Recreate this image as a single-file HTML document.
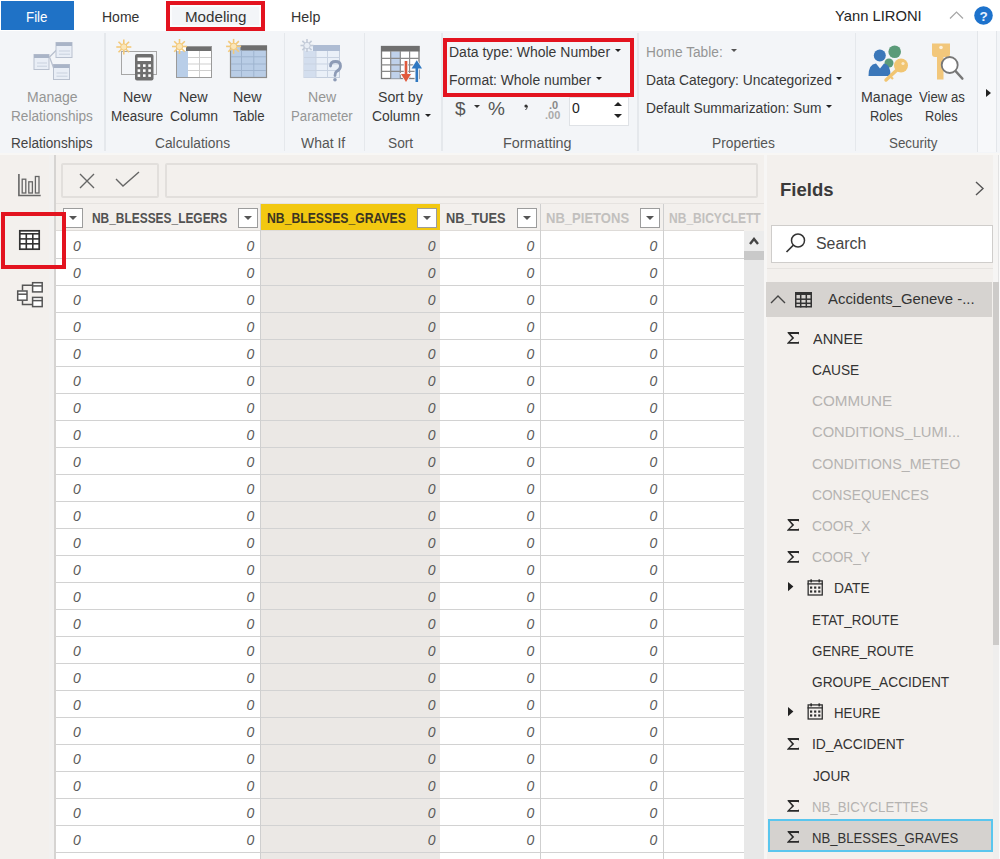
<!DOCTYPE html>
<html><head><meta charset="utf-8"><style>
html,body{margin:0;padding:0;}
body{width:1000px;height:859px;overflow:hidden;position:relative;font-family:"Liberation Sans", sans-serif;background:#f3f0ed;}
svg{overflow:visible}
</style></head><body>
<div style="position:absolute;left:0px;top:0px;width:1000px;height:31px;background:#ffffff"></div><div style="position:absolute;left:1px;top:1px;width:73px;height:29px;background:#1f72c6"></div><div style="position:absolute;left:26.05px;top:10.10px;font-size:14px;line-height:14px;color:#ffffff;font-weight:normal;font-style:normal;white-space:nowrap;transform:scaleX(0.9524);transform-origin:0 0;">File</div><div style="position:absolute;left:102.00px;top:10.10px;font-size:14px;line-height:14px;color:#333333;font-weight:normal;font-style:normal;white-space:nowrap;transform:scaleX(1.0000);transform-origin:0 0;">Home</div><div style="position:absolute;left:166px;top:1px;width:98.5px;height:30px;background:#f3f5f8;border:4px solid #e3131f;box-shadow:inset 0 0 0 2px #fbfcfd;box-sizing:border-box"></div><div style="position:absolute;left:184.92px;top:10.10px;font-size:14px;line-height:14px;color:#333333;font-weight:normal;font-style:normal;white-space:nowrap;transform:scaleX(1.0818);transform-origin:0 0;">Modeling</div><div style="position:absolute;left:291.48px;top:10.10px;font-size:14px;line-height:14px;color:#333333;font-weight:normal;font-style:normal;white-space:nowrap;transform:scaleX(1.0179);transform-origin:0 0;">Help</div><div style="position:absolute;left:835.30px;top:8.68px;font-size:14.5px;line-height:14.5px;color:#252525;font-weight:normal;font-style:normal;white-space:nowrap;transform:scaleX(1.0179);transform-origin:0 0;">Yann LIRONI</div><svg style="position:absolute;left:949px;top:11px" width="15" height="9" viewBox="0 0 15 9"><polyline points="1,7.5 7.5,1 14,7.5" fill="none" stroke="#a6a6a6" stroke-width="1.2"/></svg><svg style="position:absolute;left:974px;top:6px" width="19" height="19" viewBox="0 0 19 19"><circle cx="9.5" cy="9.5" r="9.3" fill="#1d72cc"/><text x="9.6" y="14.6" font-family="Liberation Sans" font-weight="bold" font-size="13.5" fill="#e8f2ff" text-anchor="middle">?</text></svg><div style="position:absolute;left:0px;top:31px;width:1000px;height:122px;background:#f3f5f8"></div><div style="position:absolute;left:0px;top:153px;width:1000px;height:3px;background:#f8f7f5"></div><div style="position:absolute;left:104px;top:33px;width:1.5px;height:118px;background:#e5e8ec"></div><div style="position:absolute;left:283.5px;top:33px;width:1.5px;height:118px;background:#e5e8ec"></div><div style="position:absolute;left:363.5px;top:33px;width:1.5px;height:118px;background:#e5e8ec"></div><div style="position:absolute;left:441px;top:33px;width:1.5px;height:118px;background:#e5e8ec"></div><div style="position:absolute;left:637px;top:33px;width:1.5px;height:118px;background:#e5e8ec"></div><div style="position:absolute;left:854.5px;top:33px;width:1.5px;height:118px;background:#e5e8ec"></div><div style="position:absolute;left:977px;top:31px;width:1px;height:121px;background:#e3e6ea"></div><div style="position:absolute;left:978px;top:31px;width:19px;height:121px;background:#f7f8fa"></div><div style="position:absolute;left:996px;top:31px;width:1px;height:121px;background:#e3e6ea"></div><svg style="position:absolute;left:986px;top:89px" width="6" height="8" viewBox="0 0 6 8"><polygon points="0,0 5,4 0,8" fill="#222"/></svg><div style="position:absolute;left:11.43px;top:136.10px;font-size:14px;line-height:14px;color:#444444;font-weight:normal;font-style:normal;white-space:nowrap;transform:scaleX(0.9711);transform-origin:0 0;">Relationships</div><div style="position:absolute;left:155.00px;top:136.10px;font-size:14px;line-height:14px;color:#555555;font-weight:normal;font-style:normal;white-space:nowrap;transform:scaleX(0.9842);transform-origin:0 0;">Calculations</div><div style="position:absolute;left:300.70px;top:136.10px;font-size:14px;line-height:14px;color:#555555;font-weight:normal;font-style:normal;white-space:nowrap;transform:scaleX(0.9956);transform-origin:0 0;">What If</div><div style="position:absolute;left:387.52px;top:136.10px;font-size:14px;line-height:14px;color:#555555;font-weight:normal;font-style:normal;white-space:nowrap;transform:scaleX(0.9800);transform-origin:0 0;">Sort</div><div style="position:absolute;left:503.38px;top:136.10px;font-size:14px;line-height:14px;color:#555555;font-weight:normal;font-style:normal;white-space:nowrap;transform:scaleX(1.0246);transform-origin:0 0;">Formatting</div><div style="position:absolute;left:712.31px;top:136.10px;font-size:14px;line-height:14px;color:#555555;font-weight:normal;font-style:normal;white-space:nowrap;transform:scaleX(0.9857);transform-origin:0 0;">Properties</div><div style="position:absolute;left:889.04px;top:136.10px;font-size:14px;line-height:14px;color:#555555;font-weight:normal;font-style:normal;white-space:nowrap;transform:scaleX(0.9560);transform-origin:0 0;">Security</div><div style="position:absolute;left:27.00px;top:90.10px;font-size:14px;line-height:14px;color:#959595;font-weight:normal;font-style:normal;white-space:nowrap;transform:scaleX(1.0000);transform-origin:0 0;">Manage</div><div style="position:absolute;left:11.13px;top:109.10px;font-size:14px;line-height:14px;color:#959595;font-weight:normal;font-style:normal;white-space:nowrap;transform:scaleX(0.9747);transform-origin:0 0;">Relationships</div><div style="position:absolute;left:122.73px;top:90.10px;font-size:14px;line-height:14px;color:#393939;font-weight:normal;font-style:normal;white-space:nowrap;transform:scaleX(1.0204);transform-origin:0 0;">New</div><div style="position:absolute;left:111.44px;top:109.10px;font-size:14px;line-height:14px;color:#393939;font-weight:normal;font-style:normal;white-space:nowrap;transform:scaleX(0.9604);transform-origin:0 0;">Measure</div><div style="position:absolute;left:179.17px;top:90.10px;font-size:14px;line-height:14px;color:#393939;font-weight:normal;font-style:normal;white-space:nowrap;transform:scaleX(1.0259);transform-origin:0 0;">New</div><div style="position:absolute;left:170.30px;top:109.10px;font-size:14px;line-height:14px;color:#393939;font-weight:normal;font-style:normal;white-space:nowrap;transform:scaleX(0.9979);transform-origin:0 0;">Column</div><div style="position:absolute;left:233.48px;top:90.10px;font-size:14px;line-height:14px;color:#393939;font-weight:normal;font-style:normal;white-space:nowrap;transform:scaleX(1.0185);transform-origin:0 0;">New</div><div style="position:absolute;left:232.60px;top:109.10px;font-size:14px;line-height:14px;color:#393939;font-weight:normal;font-style:normal;white-space:nowrap;transform:scaleX(0.9455);transform-origin:0 0;">Table</div><div style="position:absolute;left:307.59px;top:90.10px;font-size:14px;line-height:14px;color:#959595;font-weight:normal;font-style:normal;white-space:nowrap;transform:scaleX(1.0074);transform-origin:0 0;">New</div><div style="position:absolute;left:290.66px;top:109.10px;font-size:14px;line-height:14px;color:#959595;font-weight:normal;font-style:normal;white-space:nowrap;transform:scaleX(0.9446);transform-origin:0 0;">Parameter</div><div style="position:absolute;left:378.49px;top:90.10px;font-size:14px;line-height:14px;color:#393939;font-weight:normal;font-style:normal;white-space:nowrap;transform:scaleX(1.0093);transform-origin:0 0;">Sort by</div><div style="position:absolute;left:371.80px;top:109.10px;font-size:14px;line-height:14px;color:#393939;font-weight:normal;font-style:normal;white-space:nowrap;transform:scaleX(0.9937);transform-origin:0 0;">Column</div><svg style="position:absolute;left:425px;top:114px" width="6" height="4" viewBox="0 0 6 4"><polygon points="0,0 6,0 3,3" fill="#222"/></svg><div style="position:absolute;left:449.00px;top:45.10px;font-size:14px;line-height:14px;color:#393939;font-weight:normal;font-style:normal;white-space:nowrap;transform:scaleX(1.0000);transform-origin:0 0;">Data type: Whole Number</div><svg style="position:absolute;left:615px;top:49px" width="6" height="4" viewBox="0 0 6 4"><polygon points="0,0 6,0 3,3" fill="#222"/></svg><div style="position:absolute;left:449.01px;top:72.60px;font-size:14px;line-height:14px;color:#393939;font-weight:normal;font-style:normal;white-space:nowrap;transform:scaleX(0.9930);transform-origin:0 0;">Format: Whole number</div><svg style="position:absolute;left:596px;top:77px" width="6" height="4" viewBox="0 0 6 4"><polygon points="0,0 6,0 3,3" fill="#222"/></svg><div style="position:absolute;left:443px;top:38px;width:191px;height:58.5px;border:4px solid #e3131f;box-sizing:border-box"></div><div style="position:absolute;left:455px;top:98.85px;font-size:19px;line-height:19px;color:#555;font-weight:normal;font-style:normal;white-space:nowrap;">$</div><svg style="position:absolute;left:474px;top:105px" width="6" height="4" viewBox="0 0 6 4"><polygon points="0,0 6,0 3,3" fill="#333"/></svg><div style="position:absolute;left:488px;top:98.85px;font-size:19px;line-height:19px;color:#555;font-weight:normal;font-style:normal;white-space:nowrap;">%</div><svg style="position:absolute;left:524px;top:104px" width="5" height="7" viewBox="0 0 5 7"><circle cx="2" cy="2" r="1.6" fill="#333"/><path d="M3.3,2 Q3.3,4.5 1.5,6" stroke="#333" stroke-width="1" fill="none"/></svg><div style="position:absolute;left:549px;top:99.65px;font-size:11px;line-height:11px;color:#888;font-weight:normal;font-style:normal;white-space:nowrap;font-weight:bold">.0</div><div style="position:absolute;left:545px;top:109.65px;font-size:11px;line-height:11px;color:#aaa;font-weight:normal;font-style:normal;white-space:nowrap;font-weight:bold">.00</div><div style="position:absolute;left:569px;top:97px;width:60px;height:29px;background:#ffffff;border:1px solid #dfe2e6;box-sizing:border-box"></div><div style="position:absolute;left:572px;top:101.10px;font-size:14px;line-height:14px;color:#222;font-weight:normal;font-style:normal;white-space:nowrap;">0</div><svg style="position:absolute;left:614px;top:102px" width="8" height="4" viewBox="0 0 8 4"><polygon points="0,4 4,0 8,4" fill="#222"/></svg><svg style="position:absolute;left:614px;top:114px" width="8" height="4" viewBox="0 0 8 4"><polygon points="0,0 8,0 4,4" fill="#222"/></svg><div style="position:absolute;left:645.62px;top:45.10px;font-size:14px;line-height:14px;color:#959595;font-weight:normal;font-style:normal;white-space:nowrap;transform:scaleX(0.9792);transform-origin:0 0;">Home Table:</div><svg style="position:absolute;left:731px;top:49px" width="6" height="4" viewBox="0 0 6 4"><polygon points="0,0 6,0 3,3" fill="#555"/></svg><div style="position:absolute;left:645.61px;top:73.10px;font-size:14px;line-height:14px;color:#393939;font-weight:normal;font-style:normal;white-space:nowrap;transform:scaleX(0.9872);transform-origin:0 0;">Data Category: Uncategorized</div><svg style="position:absolute;left:836px;top:77px" width="6" height="4" viewBox="0 0 6 4"><polygon points="0,0 6,0 3,3" fill="#222"/></svg><div style="position:absolute;left:645.62px;top:101.10px;font-size:14px;line-height:14px;color:#393939;font-weight:normal;font-style:normal;white-space:nowrap;transform:scaleX(0.9847);transform-origin:0 0;">Default Summarization: Sum</div><svg style="position:absolute;left:826px;top:105px" width="6" height="4" viewBox="0 0 6 4"><polygon points="0,0 6,0 3,3" fill="#222"/></svg><div style="position:absolute;left:860.98px;top:90.10px;font-size:14px;line-height:14px;color:#393939;font-weight:normal;font-style:normal;white-space:nowrap;transform:scaleX(1.0163);transform-origin:0 0;">Manage</div><div style="position:absolute;left:870.09px;top:109.10px;font-size:14px;line-height:14px;color:#393939;font-weight:normal;font-style:normal;white-space:nowrap;transform:scaleX(0.9143);transform-origin:0 0;">Roles</div><div style="position:absolute;left:918.90px;top:90.10px;font-size:14px;line-height:14px;color:#393939;font-weight:normal;font-style:normal;white-space:nowrap;transform:scaleX(0.9408);transform-origin:0 0;">View as</div><div style="position:absolute;left:925.49px;top:109.10px;font-size:14px;line-height:14px;color:#393939;font-weight:normal;font-style:normal;white-space:nowrap;transform:scaleX(0.9086);transform-origin:0 0;">Roles</div><svg style="position:absolute;left:0px;top:0px" width="1000" height="100" viewBox="0 0 1000 100"><polyline points="56.5,50 49.5,57 54,69" fill="none" stroke="#b9c1cf" stroke-width="1.3"/><rect x="34" y="54.5" width="15" height="15" fill="#e9eef6" stroke="#b9c1cf" stroke-width="1"/><rect x="34" y="54.5" width="15" height="3.5" fill="#a9b4c7"/><line x1="37" y1="63.0" x2="47" y2="63.0" stroke="#c9d1de" stroke-width="1"/><line x1="37" y1="66.2" x2="47" y2="66.2" stroke="#c9d1de" stroke-width="1"/><rect x="56" y="42.5" width="16" height="15" fill="#e9eef6" stroke="#b9c1cf" stroke-width="1"/><rect x="56" y="42.5" width="16" height="3.5" fill="#a9b4c7"/><line x1="59" y1="51.0" x2="70" y2="51.0" stroke="#c9d1de" stroke-width="1"/><line x1="59" y1="54.2" x2="70" y2="54.2" stroke="#c9d1de" stroke-width="1"/><rect x="53.5" y="64.5" width="16" height="15" fill="#e9eef6" stroke="#b9c1cf" stroke-width="1"/><rect x="53.5" y="64.5" width="16" height="3.5" fill="#a9b4c7"/><line x1="56.5" y1="73.0" x2="67.5" y2="73.0" stroke="#c9d1de" stroke-width="1"/><line x1="56.5" y1="76.2" x2="67.5" y2="76.2" stroke="#c9d1de" stroke-width="1"/><rect x="121.5" y="51.5" width="35" height="23" fill="none" stroke="#a6a6a6" stroke-width="1"/><rect x="135" y="54" width="18.5" height="26.5" rx="2" fill="#6f6f6f"/><rect x="137.5" y="57.5" width="13.5" height="3.5" fill="#ffffff"/><rect x="137.6" y="64.3" width="2.6" height="2.6" fill="#ffffff"/><rect x="143" y="64.3" width="2.6" height="2.6" fill="#ffffff"/><rect x="148.3" y="64.3" width="2.6" height="2.6" fill="#ffffff"/><rect x="137.6" y="69.3" width="2.6" height="2.6" fill="#ffffff"/><rect x="143" y="69.3" width="2.6" height="2.6" fill="#ffffff"/><rect x="148.3" y="69.3" width="2.6" height="2.6" fill="#ffffff"/><rect x="137.6" y="74.3" width="2.6" height="2.6" fill="#ffffff"/><rect x="143" y="74.3" width="2.6" height="2.6" fill="#ffffff"/><rect x="148.3" y="74.3" width="2.6" height="2.6" fill="#ffffff"/><line x1="123.80" y1="47.00" x2="131.30" y2="47.00" stroke="#f3c97a" stroke-width="1.6"/><line x1="123.80" y1="47.00" x2="129.10" y2="52.30" stroke="#f3c97a" stroke-width="1.6"/><line x1="123.80" y1="47.00" x2="123.80" y2="54.50" stroke="#f3c97a" stroke-width="1.6"/><line x1="123.80" y1="47.00" x2="118.50" y2="52.30" stroke="#f3c97a" stroke-width="1.6"/><line x1="123.80" y1="47.00" x2="116.30" y2="47.00" stroke="#f3c97a" stroke-width="1.6"/><line x1="123.80" y1="47.00" x2="118.50" y2="41.70" stroke="#f3c97a" stroke-width="1.6"/><line x1="123.80" y1="47.00" x2="123.80" y2="39.50" stroke="#f3c97a" stroke-width="1.6"/><line x1="123.80" y1="47.00" x2="129.10" y2="41.70" stroke="#f3c97a" stroke-width="1.6"/><circle cx="123.8" cy="47" r="3.2" fill="#fbe6b8" stroke="#f3c97a" stroke-width="1"/><rect x="176.5" y="46.5" width="35" height="31" fill="#ffffff" stroke="#9a9a9a" stroke-width="1"/><rect x="176.5" y="51" width="11.5" height="26.5" fill="#b9cee8"/><rect x="186" y="46" width="26" height="5" fill="#6f6f6f"/><line x1="188" y1="57.5" x2="211.5" y2="57.5" stroke="#cfcfcf" stroke-width="1"/><line x1="188" y1="64" x2="211.5" y2="64" stroke="#cfcfcf" stroke-width="1"/><line x1="188" y1="70.5" x2="211.5" y2="70.5" stroke="#cfcfcf" stroke-width="1"/><line x1="199.5" y1="51" x2="199.5" y2="77.5" stroke="#cfcfcf" stroke-width="1"/><rect x="176.5" y="46.5" width="35" height="31" fill="none" stroke="#9a9a9a" stroke-width="1"/><line x1="179.50" y1="46.50" x2="187.00" y2="46.50" stroke="#f3c97a" stroke-width="1.6"/><line x1="179.50" y1="46.50" x2="184.80" y2="51.80" stroke="#f3c97a" stroke-width="1.6"/><line x1="179.50" y1="46.50" x2="179.50" y2="54.00" stroke="#f3c97a" stroke-width="1.6"/><line x1="179.50" y1="46.50" x2="174.20" y2="51.80" stroke="#f3c97a" stroke-width="1.6"/><line x1="179.50" y1="46.50" x2="172.00" y2="46.50" stroke="#f3c97a" stroke-width="1.6"/><line x1="179.50" y1="46.50" x2="174.20" y2="41.20" stroke="#f3c97a" stroke-width="1.6"/><line x1="179.50" y1="46.50" x2="179.50" y2="39.00" stroke="#f3c97a" stroke-width="1.6"/><line x1="179.50" y1="46.50" x2="184.80" y2="41.20" stroke="#f3c97a" stroke-width="1.6"/><circle cx="179.5" cy="46.5" r="3.2" fill="#fbe6b8" stroke="#f3c97a" stroke-width="1"/><rect x="230.5" y="46" width="36" height="31.5" fill="#b9cde6" stroke="#8c8c8c" stroke-width="1.2"/><rect x="240.5" y="45.5" width="26.5" height="5" fill="#6f6f6f"/><line x1="231" y1="56.8" x2="266" y2="56.8" stroke="#9fb4cf" stroke-width="1"/><line x1="231" y1="64" x2="266" y2="64" stroke="#9fb4cf" stroke-width="1"/><line x1="231" y1="70.5" x2="266" y2="70.5" stroke="#9fb4cf" stroke-width="1"/><line x1="241.5" y1="50.5" x2="241.5" y2="77" stroke="#9fb4cf" stroke-width="1"/><line x1="253.8" y1="50.5" x2="253.8" y2="77" stroke="#9fb4cf" stroke-width="1"/><line x1="233.60" y1="46.40" x2="241.10" y2="46.40" stroke="#f3c97a" stroke-width="1.6"/><line x1="233.60" y1="46.40" x2="238.90" y2="51.70" stroke="#f3c97a" stroke-width="1.6"/><line x1="233.60" y1="46.40" x2="233.60" y2="53.90" stroke="#f3c97a" stroke-width="1.6"/><line x1="233.60" y1="46.40" x2="228.30" y2="51.70" stroke="#f3c97a" stroke-width="1.6"/><line x1="233.60" y1="46.40" x2="226.10" y2="46.40" stroke="#f3c97a" stroke-width="1.6"/><line x1="233.60" y1="46.40" x2="228.30" y2="41.10" stroke="#f3c97a" stroke-width="1.6"/><line x1="233.60" y1="46.40" x2="233.60" y2="38.90" stroke="#f3c97a" stroke-width="1.6"/><line x1="233.60" y1="46.40" x2="238.90" y2="41.10" stroke="#f3c97a" stroke-width="1.6"/><circle cx="233.6" cy="46.4" r="3.2" fill="#fbe6b8" stroke="#f3c97a" stroke-width="1"/><rect x="304" y="45.5" width="35.5" height="32" fill="#eaf0f8" stroke="#c3cddc" stroke-width="1"/><rect x="304" y="51" width="12" height="26.5" fill="#d3deee"/><rect x="313" y="45" width="27" height="6" fill="#aebcd3"/><line x1="304" y1="57.5" x2="339.5" y2="57.5" stroke="#c9d3e2" stroke-width="1"/><line x1="304" y1="64" x2="339.5" y2="64" stroke="#c9d3e2" stroke-width="1"/><line x1="304" y1="70.5" x2="339.5" y2="70.5" stroke="#c9d3e2" stroke-width="1"/><line x1="316" y1="51" x2="316" y2="77.5" stroke="#c9d3e2" stroke-width="1"/><line x1="327.5" y1="51" x2="327.5" y2="77.5" stroke="#c9d3e2" stroke-width="1"/><line x1="307.00" y1="45.50" x2="313.50" y2="45.50" stroke="#c3cbd8" stroke-width="1.6"/><line x1="307.00" y1="45.50" x2="311.60" y2="50.10" stroke="#c3cbd8" stroke-width="1.6"/><line x1="307.00" y1="45.50" x2="307.00" y2="52.00" stroke="#c3cbd8" stroke-width="1.6"/><line x1="307.00" y1="45.50" x2="302.40" y2="50.10" stroke="#c3cbd8" stroke-width="1.6"/><line x1="307.00" y1="45.50" x2="300.50" y2="45.50" stroke="#c3cbd8" stroke-width="1.6"/><line x1="307.00" y1="45.50" x2="302.40" y2="40.90" stroke="#c3cbd8" stroke-width="1.6"/><line x1="307.00" y1="45.50" x2="307.00" y2="39.00" stroke="#c3cbd8" stroke-width="1.6"/><line x1="307.00" y1="45.50" x2="311.60" y2="40.90" stroke="#c3cbd8" stroke-width="1.6"/><circle cx="307" cy="45.5" r="3.2" fill="#e9eef5" stroke="#c3cbd8" stroke-width="1"/><path d="M330.5,66 Q330.5,61.5 335.5,61.5 Q340.5,61.5 340.5,66 Q340.5,69.5 336.5,71.5 Q335,72.5 335,75.5" fill="none" stroke="#8d9bb6" stroke-width="2.8" stroke-linecap="round"/><circle cx="335" cy="79.8" r="1.8" fill="#8d9bb6"/><rect x="381.5" y="46.5" width="37.5" height="32" fill="#ffffff" stroke="#7a7a7a" stroke-width="1.3"/><rect x="391" y="51.5" width="9.5" height="27" fill="#bfd1ea"/><rect x="381" y="46" width="38.5" height="5.5" fill="#6f6f6f"/><line x1="381.5" y1="58.4" x2="419" y2="58.4" stroke="#8a8a8a" stroke-width="1.2"/><line x1="381.5" y1="64.8" x2="419" y2="64.8" stroke="#8a8a8a" stroke-width="1.2"/><line x1="381.5" y1="71.3" x2="419" y2="71.3" stroke="#8a8a8a" stroke-width="1.2"/><line x1="390.7" y1="51" x2="390.7" y2="78.5" stroke="#8a8a8a" stroke-width="1.2"/><line x1="400.3" y1="51" x2="400.3" y2="78.5" stroke="#8a8a8a" stroke-width="1.2"/><line x1="409.6" y1="51" x2="409.6" y2="78.5" stroke="#8a8a8a" stroke-width="1.2"/><line x1="406" y1="60.5" x2="406" y2="76" stroke="#f3f5f8" stroke-width="4.5"/><polygon points="399.5,73 412.5,73 406,83.5" fill="#f3f5f8"/><line x1="416.8" y1="64" x2="416.8" y2="82.5" stroke="#f3f5f8" stroke-width="4.5"/><polygon points="410,69.5 423.5,69.5 416.8,59" fill="#f3f5f8"/><line x1="406" y1="61" x2="406" y2="76" stroke="#e0593b" stroke-width="2.6"/><polygon points="401,74 411,74 406,82" fill="#e0593b"/><line x1="416.8" y1="67" x2="416.8" y2="82" stroke="#2f78c1" stroke-width="2.6"/><polygon points="411.6,68.6 422,68.6 416.8,60.2" fill="#2f78c1"/><circle cx="894.7" cy="51.8" r="6.3" fill="#5b9b79"/><circle cx="889" cy="63" r="4.5" fill="#5b9b79"/><path d="M868.5,76 Q868.5,64 876,63.5 L880,68.5 L884,63.5 Q890.5,64 890.5,76 Z" fill="#3b77b9"/><circle cx="879.8" cy="55.6" r="6" fill="#3b77b9"/><line x1="886" y1="80" x2="898" y2="69" stroke="#f1c572" stroke-width="3.5" stroke-linecap="round"/><circle cx="901" cy="65.5" r="7" fill="#f1c572"/><circle cx="903" cy="63.5" r="1.6" fill="#fbe9c8"/><line x1="890" y1="76" x2="893" y2="79" stroke="#f1c572" stroke-width="2.2"/><path d="M932,43.5 L950,43.5 L950,54 Q950,57 947,57 L935,57 Q932,57 932,54 Z" fill="#f2c77b"/><circle cx="941" cy="47.5" r="1.8" fill="#fdf1dc"/><rect x="937" y="56" width="6.5" height="23.5" fill="#f2c77b"/><line x1="955.5" y1="71" x2="962.3" y2="78.5" stroke="#777" stroke-width="2.6" stroke-linecap="round"/><circle cx="949.7" cy="65" r="8" fill="#ffffff" stroke="#777" stroke-width="1.8"/></svg><div style="position:absolute;left:0px;top:155px;width:1000px;height:704px;background:#f3f0ed"></div><div style="position:absolute;left:49px;top:155px;width:5px;height:704px;background:#f2f1f0"></div><div style="position:absolute;left:54px;top:155px;width:2px;height:704px;background:#d6d4d2"></div><svg style="position:absolute;left:0px;top:0px" width="60" height="320" viewBox="0 0 60 320"><polyline points="18.9,174 18.9,195.5 40.7,195.5" fill="none" stroke="#666" stroke-width="1.6"/><rect x="22.2" y="179.2" width="3.6" height="13.8" fill="none" stroke="#666" stroke-width="1.3"/><rect x="28.8" y="181.8" width="3.6" height="11.2" fill="none" stroke="#666" stroke-width="1.3"/><rect x="35.4" y="176.5" width="3.6" height="16.5" fill="none" stroke="#666" stroke-width="1.3"/><rect x="19.8" y="230.8" width="19.4" height="18.4" fill="#fff" stroke="#333" stroke-width="1.7"/><line x1="19" y1="233.8" x2="40" y2="233.8" stroke="#333" stroke-width="1.6"/><line x1="19" y1="238.9" x2="40" y2="238.9" stroke="#333" stroke-width="1.6"/><line x1="19" y1="243.8" x2="40" y2="243.8" stroke="#333" stroke-width="1.6"/><line x1="26.3" y1="233" x2="26.3" y2="249.5" stroke="#333" stroke-width="1.6"/><line x1="32.8" y1="233" x2="32.8" y2="249.5" stroke="#333" stroke-width="1.6"/><polyline points="22.5,290.5 22.5,285.2 32,285.2" fill="none" stroke="#555" stroke-width="1.5"/><polyline points="22.5,300.5 22.5,304.5 32,304.5" fill="none" stroke="#555" stroke-width="1.5"/><rect x="32.6" y="282.7" width="9.6" height="9.2" fill="#fff" stroke="#555" stroke-width="1.5"/><line x1="32.6" y1="285.9" x2="42.2" y2="285.9" stroke="#555" stroke-width="1.5"/><rect x="17.7" y="291" width="9.3" height="9.2" fill="#fff" stroke="#555" stroke-width="1.5"/><line x1="17.7" y1="294.2" x2="27.0" y2="294.2" stroke="#555" stroke-width="1.5"/><rect x="32.6" y="297.4" width="9.6" height="9.2" fill="#fff" stroke="#555" stroke-width="1.5"/><line x1="32.6" y1="300.59999999999997" x2="42.2" y2="300.59999999999997" stroke="#555" stroke-width="1.5"/></svg><div style="position:absolute;left:61px;top:162.5px;width:98px;height:35.5px;border:2px solid #e2dfdc;border-radius:2px;box-sizing:border-box"></div><div style="position:absolute;left:164.5px;top:162.5px;width:593px;height:35.5px;border:2px solid #e2dfdc;border-radius:2px;box-sizing:border-box"></div><svg style="position:absolute;left:79px;top:172.5px" width="16" height="16" viewBox="0 0 16 16"><path d="M1,1 L15,15 M15,1 L1,15" stroke="#666" stroke-width="1.4" fill="none"/></svg><svg style="position:absolute;left:114.5px;top:171px" width="25" height="17" viewBox="0 0 25 17"><path d="M1,8 L8,15 L24,1" stroke="#666" stroke-width="1.4" fill="none"/></svg><div style="position:absolute;left:56px;top:204px;width:708px;height:27px;background:#f3f0ed"></div><div style="position:absolute;left:56px;top:203px;width:708px;height:1px;background:#e6e3e0"></div><div style="position:absolute;left:261px;top:204px;width:179px;height:27px;background:#f2c811"></div><div style="position:absolute;left:56px;top:231px;width:688px;height:628px;background:#ffffff"></div><div style="position:absolute;left:261px;top:231px;width:179px;height:628px;background:#ebe8e5"></div><div style="position:absolute;left:56px;top:258px;width:688px;height:1px;background:#d2d2d2"></div><div style="position:absolute;left:56px;top:285px;width:688px;height:1px;background:#d2d2d2"></div><div style="position:absolute;left:56px;top:312px;width:688px;height:1px;background:#d2d2d2"></div><div style="position:absolute;left:56px;top:339px;width:688px;height:1px;background:#d2d2d2"></div><div style="position:absolute;left:56px;top:366px;width:688px;height:1px;background:#d2d2d2"></div><div style="position:absolute;left:56px;top:393px;width:688px;height:1px;background:#d2d2d2"></div><div style="position:absolute;left:56px;top:420px;width:688px;height:1px;background:#d2d2d2"></div><div style="position:absolute;left:56px;top:447px;width:688px;height:1px;background:#d2d2d2"></div><div style="position:absolute;left:56px;top:474px;width:688px;height:1px;background:#d2d2d2"></div><div style="position:absolute;left:56px;top:501px;width:688px;height:1px;background:#d2d2d2"></div><div style="position:absolute;left:56px;top:528px;width:688px;height:1px;background:#d2d2d2"></div><div style="position:absolute;left:56px;top:555px;width:688px;height:1px;background:#d2d2d2"></div><div style="position:absolute;left:56px;top:582px;width:688px;height:1px;background:#d2d2d2"></div><div style="position:absolute;left:56px;top:609px;width:688px;height:1px;background:#d2d2d2"></div><div style="position:absolute;left:56px;top:636px;width:688px;height:1px;background:#d2d2d2"></div><div style="position:absolute;left:56px;top:663px;width:688px;height:1px;background:#d2d2d2"></div><div style="position:absolute;left:56px;top:690px;width:688px;height:1px;background:#d2d2d2"></div><div style="position:absolute;left:56px;top:717px;width:688px;height:1px;background:#d2d2d2"></div><div style="position:absolute;left:56px;top:744px;width:688px;height:1px;background:#d2d2d2"></div><div style="position:absolute;left:56px;top:771px;width:688px;height:1px;background:#d2d2d2"></div><div style="position:absolute;left:56px;top:798px;width:688px;height:1px;background:#d2d2d2"></div><div style="position:absolute;left:56px;top:825px;width:688px;height:1px;background:#d2d2d2"></div><div style="position:absolute;left:56px;top:852px;width:688px;height:1px;background:#d2d2d2"></div><div style="position:absolute;left:56px;top:230px;width:688px;height:1px;background:#dedbd8"></div><div style="position:absolute;left:260px;top:204px;width:1px;height:655px;background:#cfcfcf"></div><div style="position:absolute;left:540px;top:204px;width:1px;height:655px;background:#cfcfcf"></div><div style="position:absolute;left:663px;top:204px;width:1px;height:655px;background:#cfcfcf"></div><div style="position:absolute;left:62.5px;top:207.5px;width:20px;height:20px;background:#ffffff;border:1px solid #9c9c9c;box-sizing:border-box"></div><svg style="position:absolute;left:68.5px;top:215.5px" width="8" height="4" viewBox="0 0 8 4"><polygon points="0,0 8,0 4,4" fill="#555"/></svg><div style="position:absolute;left:237.5px;top:207.5px;width:20px;height:20px;background:#ffffff;border:1px solid #9c9c9c;box-sizing:border-box"></div><svg style="position:absolute;left:243.5px;top:215.5px" width="8" height="4" viewBox="0 0 8 4"><polygon points="0,0 8,0 4,4" fill="#555"/></svg><div style="position:absolute;left:417px;top:208px;width:20px;height:20px;background:#ffffff;border:1px solid #9c9c9c;box-sizing:border-box"></div><svg style="position:absolute;left:423.0px;top:216.0px" width="8" height="4" viewBox="0 0 8 4"><polygon points="0,0 8,0 4,4" fill="#555"/></svg><div style="position:absolute;left:517px;top:207.5px;width:20px;height:20px;background:#ffffff;border:1px solid #9c9c9c;box-sizing:border-box"></div><svg style="position:absolute;left:523.0px;top:215.5px" width="8" height="4" viewBox="0 0 8 4"><polygon points="0,0 8,0 4,4" fill="#555"/></svg><div style="position:absolute;left:640px;top:207.5px;width:20px;height:20px;background:#ffffff;border:1px solid #9c9c9c;box-sizing:border-box"></div><svg style="position:absolute;left:646.0px;top:215.5px" width="8" height="4" viewBox="0 0 8 4"><polygon points="0,0 8,0 4,4" fill="#555"/></svg><div style="position:absolute;left:91.85px;top:211.10px;font-size:14px;line-height:14px;color:#525252;font-weight:bold;font-style:normal;white-space:nowrap;transform:scaleX(0.8516);transform-origin:0 0;">NB_BLESSES_LEGERS</div><div style="position:absolute;left:266.73px;top:211.10px;font-size:14px;line-height:14px;color:#3b3421;font-weight:bold;font-style:normal;white-space:nowrap;transform:scaleX(0.8722);transform-origin:0 0;">NB_BLESSES_GRAVES</div><div style="position:absolute;left:446.09px;top:211.10px;font-size:14px;line-height:14px;color:#525252;font-weight:bold;font-style:normal;white-space:nowrap;transform:scaleX(0.9125);transform-origin:0 0;">NB_TUES</div><div style="position:absolute;left:546.07px;top:211.10px;font-size:14px;line-height:14px;color:#c2c0be;font-weight:bold;font-style:normal;white-space:nowrap;transform:scaleX(0.9318);transform-origin:0 0;">NB_PIETONS</div><div style="position:absolute;left:669.34px;top:211.10px;font-size:14px;line-height:14px;color:#c2c0be;font-weight:bold;font-style:normal;white-space:nowrap;transform:scaleX(0.8604);transform-origin:0 0;">NB_BICYCLETT</div><div style="position:absolute;left:73px;top:239.10px;font-size:14px;line-height:14px;color:#5a5a5a;font-weight:normal;font-style:italic;white-space:nowrap;">0</div><div style="position:absolute;right:745.7px;top:239.10px;font-size:14px;line-height:14px;color:#5a5a5a;font-weight:normal;font-style:italic;white-space:nowrap;">0</div><div style="position:absolute;right:564.5px;top:239.10px;font-size:14px;line-height:14px;color:#5a5a5a;font-weight:normal;font-style:italic;white-space:nowrap;">0</div><div style="position:absolute;right:465.79999999999995px;top:239.10px;font-size:14px;line-height:14px;color:#5a5a5a;font-weight:normal;font-style:italic;white-space:nowrap;">0</div><div style="position:absolute;right:342.70000000000005px;top:239.10px;font-size:14px;line-height:14px;color:#5a5a5a;font-weight:normal;font-style:italic;white-space:nowrap;">0</div><div style="position:absolute;left:73px;top:266.10px;font-size:14px;line-height:14px;color:#5a5a5a;font-weight:normal;font-style:italic;white-space:nowrap;">0</div><div style="position:absolute;right:745.7px;top:266.10px;font-size:14px;line-height:14px;color:#5a5a5a;font-weight:normal;font-style:italic;white-space:nowrap;">0</div><div style="position:absolute;right:564.5px;top:266.10px;font-size:14px;line-height:14px;color:#5a5a5a;font-weight:normal;font-style:italic;white-space:nowrap;">0</div><div style="position:absolute;right:465.79999999999995px;top:266.10px;font-size:14px;line-height:14px;color:#5a5a5a;font-weight:normal;font-style:italic;white-space:nowrap;">0</div><div style="position:absolute;right:342.70000000000005px;top:266.10px;font-size:14px;line-height:14px;color:#5a5a5a;font-weight:normal;font-style:italic;white-space:nowrap;">0</div><div style="position:absolute;left:73px;top:293.10px;font-size:14px;line-height:14px;color:#5a5a5a;font-weight:normal;font-style:italic;white-space:nowrap;">0</div><div style="position:absolute;right:745.7px;top:293.10px;font-size:14px;line-height:14px;color:#5a5a5a;font-weight:normal;font-style:italic;white-space:nowrap;">0</div><div style="position:absolute;right:564.5px;top:293.10px;font-size:14px;line-height:14px;color:#5a5a5a;font-weight:normal;font-style:italic;white-space:nowrap;">0</div><div style="position:absolute;right:465.79999999999995px;top:293.10px;font-size:14px;line-height:14px;color:#5a5a5a;font-weight:normal;font-style:italic;white-space:nowrap;">0</div><div style="position:absolute;right:342.70000000000005px;top:293.10px;font-size:14px;line-height:14px;color:#5a5a5a;font-weight:normal;font-style:italic;white-space:nowrap;">0</div><div style="position:absolute;left:73px;top:320.10px;font-size:14px;line-height:14px;color:#5a5a5a;font-weight:normal;font-style:italic;white-space:nowrap;">0</div><div style="position:absolute;right:745.7px;top:320.10px;font-size:14px;line-height:14px;color:#5a5a5a;font-weight:normal;font-style:italic;white-space:nowrap;">0</div><div style="position:absolute;right:564.5px;top:320.10px;font-size:14px;line-height:14px;color:#5a5a5a;font-weight:normal;font-style:italic;white-space:nowrap;">0</div><div style="position:absolute;right:465.79999999999995px;top:320.10px;font-size:14px;line-height:14px;color:#5a5a5a;font-weight:normal;font-style:italic;white-space:nowrap;">0</div><div style="position:absolute;right:342.70000000000005px;top:320.10px;font-size:14px;line-height:14px;color:#5a5a5a;font-weight:normal;font-style:italic;white-space:nowrap;">0</div><div style="position:absolute;left:73px;top:347.10px;font-size:14px;line-height:14px;color:#5a5a5a;font-weight:normal;font-style:italic;white-space:nowrap;">0</div><div style="position:absolute;right:745.7px;top:347.10px;font-size:14px;line-height:14px;color:#5a5a5a;font-weight:normal;font-style:italic;white-space:nowrap;">0</div><div style="position:absolute;right:564.5px;top:347.10px;font-size:14px;line-height:14px;color:#5a5a5a;font-weight:normal;font-style:italic;white-space:nowrap;">0</div><div style="position:absolute;right:465.79999999999995px;top:347.10px;font-size:14px;line-height:14px;color:#5a5a5a;font-weight:normal;font-style:italic;white-space:nowrap;">0</div><div style="position:absolute;right:342.70000000000005px;top:347.10px;font-size:14px;line-height:14px;color:#5a5a5a;font-weight:normal;font-style:italic;white-space:nowrap;">0</div><div style="position:absolute;left:73px;top:374.10px;font-size:14px;line-height:14px;color:#5a5a5a;font-weight:normal;font-style:italic;white-space:nowrap;">0</div><div style="position:absolute;right:745.7px;top:374.10px;font-size:14px;line-height:14px;color:#5a5a5a;font-weight:normal;font-style:italic;white-space:nowrap;">0</div><div style="position:absolute;right:564.5px;top:374.10px;font-size:14px;line-height:14px;color:#5a5a5a;font-weight:normal;font-style:italic;white-space:nowrap;">0</div><div style="position:absolute;right:465.79999999999995px;top:374.10px;font-size:14px;line-height:14px;color:#5a5a5a;font-weight:normal;font-style:italic;white-space:nowrap;">0</div><div style="position:absolute;right:342.70000000000005px;top:374.10px;font-size:14px;line-height:14px;color:#5a5a5a;font-weight:normal;font-style:italic;white-space:nowrap;">0</div><div style="position:absolute;left:73px;top:401.10px;font-size:14px;line-height:14px;color:#5a5a5a;font-weight:normal;font-style:italic;white-space:nowrap;">0</div><div style="position:absolute;right:745.7px;top:401.10px;font-size:14px;line-height:14px;color:#5a5a5a;font-weight:normal;font-style:italic;white-space:nowrap;">0</div><div style="position:absolute;right:564.5px;top:401.10px;font-size:14px;line-height:14px;color:#5a5a5a;font-weight:normal;font-style:italic;white-space:nowrap;">0</div><div style="position:absolute;right:465.79999999999995px;top:401.10px;font-size:14px;line-height:14px;color:#5a5a5a;font-weight:normal;font-style:italic;white-space:nowrap;">0</div><div style="position:absolute;right:342.70000000000005px;top:401.10px;font-size:14px;line-height:14px;color:#5a5a5a;font-weight:normal;font-style:italic;white-space:nowrap;">0</div><div style="position:absolute;left:73px;top:428.10px;font-size:14px;line-height:14px;color:#5a5a5a;font-weight:normal;font-style:italic;white-space:nowrap;">0</div><div style="position:absolute;right:745.7px;top:428.10px;font-size:14px;line-height:14px;color:#5a5a5a;font-weight:normal;font-style:italic;white-space:nowrap;">0</div><div style="position:absolute;right:564.5px;top:428.10px;font-size:14px;line-height:14px;color:#5a5a5a;font-weight:normal;font-style:italic;white-space:nowrap;">0</div><div style="position:absolute;right:465.79999999999995px;top:428.10px;font-size:14px;line-height:14px;color:#5a5a5a;font-weight:normal;font-style:italic;white-space:nowrap;">0</div><div style="position:absolute;right:342.70000000000005px;top:428.10px;font-size:14px;line-height:14px;color:#5a5a5a;font-weight:normal;font-style:italic;white-space:nowrap;">0</div><div style="position:absolute;left:73px;top:455.10px;font-size:14px;line-height:14px;color:#5a5a5a;font-weight:normal;font-style:italic;white-space:nowrap;">0</div><div style="position:absolute;right:745.7px;top:455.10px;font-size:14px;line-height:14px;color:#5a5a5a;font-weight:normal;font-style:italic;white-space:nowrap;">0</div><div style="position:absolute;right:564.5px;top:455.10px;font-size:14px;line-height:14px;color:#5a5a5a;font-weight:normal;font-style:italic;white-space:nowrap;">0</div><div style="position:absolute;right:465.79999999999995px;top:455.10px;font-size:14px;line-height:14px;color:#5a5a5a;font-weight:normal;font-style:italic;white-space:nowrap;">0</div><div style="position:absolute;right:342.70000000000005px;top:455.10px;font-size:14px;line-height:14px;color:#5a5a5a;font-weight:normal;font-style:italic;white-space:nowrap;">0</div><div style="position:absolute;left:73px;top:482.10px;font-size:14px;line-height:14px;color:#5a5a5a;font-weight:normal;font-style:italic;white-space:nowrap;">0</div><div style="position:absolute;right:745.7px;top:482.10px;font-size:14px;line-height:14px;color:#5a5a5a;font-weight:normal;font-style:italic;white-space:nowrap;">0</div><div style="position:absolute;right:564.5px;top:482.10px;font-size:14px;line-height:14px;color:#5a5a5a;font-weight:normal;font-style:italic;white-space:nowrap;">0</div><div style="position:absolute;right:465.79999999999995px;top:482.10px;font-size:14px;line-height:14px;color:#5a5a5a;font-weight:normal;font-style:italic;white-space:nowrap;">0</div><div style="position:absolute;right:342.70000000000005px;top:482.10px;font-size:14px;line-height:14px;color:#5a5a5a;font-weight:normal;font-style:italic;white-space:nowrap;">0</div><div style="position:absolute;left:73px;top:509.10px;font-size:14px;line-height:14px;color:#5a5a5a;font-weight:normal;font-style:italic;white-space:nowrap;">0</div><div style="position:absolute;right:745.7px;top:509.10px;font-size:14px;line-height:14px;color:#5a5a5a;font-weight:normal;font-style:italic;white-space:nowrap;">0</div><div style="position:absolute;right:564.5px;top:509.10px;font-size:14px;line-height:14px;color:#5a5a5a;font-weight:normal;font-style:italic;white-space:nowrap;">0</div><div style="position:absolute;right:465.79999999999995px;top:509.10px;font-size:14px;line-height:14px;color:#5a5a5a;font-weight:normal;font-style:italic;white-space:nowrap;">0</div><div style="position:absolute;right:342.70000000000005px;top:509.10px;font-size:14px;line-height:14px;color:#5a5a5a;font-weight:normal;font-style:italic;white-space:nowrap;">0</div><div style="position:absolute;left:73px;top:536.10px;font-size:14px;line-height:14px;color:#5a5a5a;font-weight:normal;font-style:italic;white-space:nowrap;">0</div><div style="position:absolute;right:745.7px;top:536.10px;font-size:14px;line-height:14px;color:#5a5a5a;font-weight:normal;font-style:italic;white-space:nowrap;">0</div><div style="position:absolute;right:564.5px;top:536.10px;font-size:14px;line-height:14px;color:#5a5a5a;font-weight:normal;font-style:italic;white-space:nowrap;">0</div><div style="position:absolute;right:465.79999999999995px;top:536.10px;font-size:14px;line-height:14px;color:#5a5a5a;font-weight:normal;font-style:italic;white-space:nowrap;">0</div><div style="position:absolute;right:342.70000000000005px;top:536.10px;font-size:14px;line-height:14px;color:#5a5a5a;font-weight:normal;font-style:italic;white-space:nowrap;">0</div><div style="position:absolute;left:73px;top:563.10px;font-size:14px;line-height:14px;color:#5a5a5a;font-weight:normal;font-style:italic;white-space:nowrap;">0</div><div style="position:absolute;right:745.7px;top:563.10px;font-size:14px;line-height:14px;color:#5a5a5a;font-weight:normal;font-style:italic;white-space:nowrap;">0</div><div style="position:absolute;right:564.5px;top:563.10px;font-size:14px;line-height:14px;color:#5a5a5a;font-weight:normal;font-style:italic;white-space:nowrap;">0</div><div style="position:absolute;right:465.79999999999995px;top:563.10px;font-size:14px;line-height:14px;color:#5a5a5a;font-weight:normal;font-style:italic;white-space:nowrap;">0</div><div style="position:absolute;right:342.70000000000005px;top:563.10px;font-size:14px;line-height:14px;color:#5a5a5a;font-weight:normal;font-style:italic;white-space:nowrap;">0</div><div style="position:absolute;left:73px;top:590.10px;font-size:14px;line-height:14px;color:#5a5a5a;font-weight:normal;font-style:italic;white-space:nowrap;">0</div><div style="position:absolute;right:745.7px;top:590.10px;font-size:14px;line-height:14px;color:#5a5a5a;font-weight:normal;font-style:italic;white-space:nowrap;">0</div><div style="position:absolute;right:564.5px;top:590.10px;font-size:14px;line-height:14px;color:#5a5a5a;font-weight:normal;font-style:italic;white-space:nowrap;">0</div><div style="position:absolute;right:465.79999999999995px;top:590.10px;font-size:14px;line-height:14px;color:#5a5a5a;font-weight:normal;font-style:italic;white-space:nowrap;">0</div><div style="position:absolute;right:342.70000000000005px;top:590.10px;font-size:14px;line-height:14px;color:#5a5a5a;font-weight:normal;font-style:italic;white-space:nowrap;">0</div><div style="position:absolute;left:73px;top:617.10px;font-size:14px;line-height:14px;color:#5a5a5a;font-weight:normal;font-style:italic;white-space:nowrap;">0</div><div style="position:absolute;right:745.7px;top:617.10px;font-size:14px;line-height:14px;color:#5a5a5a;font-weight:normal;font-style:italic;white-space:nowrap;">0</div><div style="position:absolute;right:564.5px;top:617.10px;font-size:14px;line-height:14px;color:#5a5a5a;font-weight:normal;font-style:italic;white-space:nowrap;">0</div><div style="position:absolute;right:465.79999999999995px;top:617.10px;font-size:14px;line-height:14px;color:#5a5a5a;font-weight:normal;font-style:italic;white-space:nowrap;">0</div><div style="position:absolute;right:342.70000000000005px;top:617.10px;font-size:14px;line-height:14px;color:#5a5a5a;font-weight:normal;font-style:italic;white-space:nowrap;">0</div><div style="position:absolute;left:73px;top:644.10px;font-size:14px;line-height:14px;color:#5a5a5a;font-weight:normal;font-style:italic;white-space:nowrap;">0</div><div style="position:absolute;right:745.7px;top:644.10px;font-size:14px;line-height:14px;color:#5a5a5a;font-weight:normal;font-style:italic;white-space:nowrap;">0</div><div style="position:absolute;right:564.5px;top:644.10px;font-size:14px;line-height:14px;color:#5a5a5a;font-weight:normal;font-style:italic;white-space:nowrap;">0</div><div style="position:absolute;right:465.79999999999995px;top:644.10px;font-size:14px;line-height:14px;color:#5a5a5a;font-weight:normal;font-style:italic;white-space:nowrap;">0</div><div style="position:absolute;right:342.70000000000005px;top:644.10px;font-size:14px;line-height:14px;color:#5a5a5a;font-weight:normal;font-style:italic;white-space:nowrap;">0</div><div style="position:absolute;left:73px;top:671.10px;font-size:14px;line-height:14px;color:#5a5a5a;font-weight:normal;font-style:italic;white-space:nowrap;">0</div><div style="position:absolute;right:745.7px;top:671.10px;font-size:14px;line-height:14px;color:#5a5a5a;font-weight:normal;font-style:italic;white-space:nowrap;">0</div><div style="position:absolute;right:564.5px;top:671.10px;font-size:14px;line-height:14px;color:#5a5a5a;font-weight:normal;font-style:italic;white-space:nowrap;">0</div><div style="position:absolute;right:465.79999999999995px;top:671.10px;font-size:14px;line-height:14px;color:#5a5a5a;font-weight:normal;font-style:italic;white-space:nowrap;">0</div><div style="position:absolute;right:342.70000000000005px;top:671.10px;font-size:14px;line-height:14px;color:#5a5a5a;font-weight:normal;font-style:italic;white-space:nowrap;">0</div><div style="position:absolute;left:73px;top:698.10px;font-size:14px;line-height:14px;color:#5a5a5a;font-weight:normal;font-style:italic;white-space:nowrap;">0</div><div style="position:absolute;right:745.7px;top:698.10px;font-size:14px;line-height:14px;color:#5a5a5a;font-weight:normal;font-style:italic;white-space:nowrap;">0</div><div style="position:absolute;right:564.5px;top:698.10px;font-size:14px;line-height:14px;color:#5a5a5a;font-weight:normal;font-style:italic;white-space:nowrap;">0</div><div style="position:absolute;right:465.79999999999995px;top:698.10px;font-size:14px;line-height:14px;color:#5a5a5a;font-weight:normal;font-style:italic;white-space:nowrap;">0</div><div style="position:absolute;right:342.70000000000005px;top:698.10px;font-size:14px;line-height:14px;color:#5a5a5a;font-weight:normal;font-style:italic;white-space:nowrap;">0</div><div style="position:absolute;left:73px;top:725.10px;font-size:14px;line-height:14px;color:#5a5a5a;font-weight:normal;font-style:italic;white-space:nowrap;">0</div><div style="position:absolute;right:745.7px;top:725.10px;font-size:14px;line-height:14px;color:#5a5a5a;font-weight:normal;font-style:italic;white-space:nowrap;">0</div><div style="position:absolute;right:564.5px;top:725.10px;font-size:14px;line-height:14px;color:#5a5a5a;font-weight:normal;font-style:italic;white-space:nowrap;">0</div><div style="position:absolute;right:465.79999999999995px;top:725.10px;font-size:14px;line-height:14px;color:#5a5a5a;font-weight:normal;font-style:italic;white-space:nowrap;">0</div><div style="position:absolute;right:342.70000000000005px;top:725.10px;font-size:14px;line-height:14px;color:#5a5a5a;font-weight:normal;font-style:italic;white-space:nowrap;">0</div><div style="position:absolute;left:73px;top:752.10px;font-size:14px;line-height:14px;color:#5a5a5a;font-weight:normal;font-style:italic;white-space:nowrap;">0</div><div style="position:absolute;right:745.7px;top:752.10px;font-size:14px;line-height:14px;color:#5a5a5a;font-weight:normal;font-style:italic;white-space:nowrap;">0</div><div style="position:absolute;right:564.5px;top:752.10px;font-size:14px;line-height:14px;color:#5a5a5a;font-weight:normal;font-style:italic;white-space:nowrap;">0</div><div style="position:absolute;right:465.79999999999995px;top:752.10px;font-size:14px;line-height:14px;color:#5a5a5a;font-weight:normal;font-style:italic;white-space:nowrap;">0</div><div style="position:absolute;right:342.70000000000005px;top:752.10px;font-size:14px;line-height:14px;color:#5a5a5a;font-weight:normal;font-style:italic;white-space:nowrap;">0</div><div style="position:absolute;left:73px;top:779.10px;font-size:14px;line-height:14px;color:#5a5a5a;font-weight:normal;font-style:italic;white-space:nowrap;">0</div><div style="position:absolute;right:745.7px;top:779.10px;font-size:14px;line-height:14px;color:#5a5a5a;font-weight:normal;font-style:italic;white-space:nowrap;">0</div><div style="position:absolute;right:564.5px;top:779.10px;font-size:14px;line-height:14px;color:#5a5a5a;font-weight:normal;font-style:italic;white-space:nowrap;">0</div><div style="position:absolute;right:465.79999999999995px;top:779.10px;font-size:14px;line-height:14px;color:#5a5a5a;font-weight:normal;font-style:italic;white-space:nowrap;">0</div><div style="position:absolute;right:342.70000000000005px;top:779.10px;font-size:14px;line-height:14px;color:#5a5a5a;font-weight:normal;font-style:italic;white-space:nowrap;">0</div><div style="position:absolute;left:73px;top:806.10px;font-size:14px;line-height:14px;color:#5a5a5a;font-weight:normal;font-style:italic;white-space:nowrap;">0</div><div style="position:absolute;right:745.7px;top:806.10px;font-size:14px;line-height:14px;color:#5a5a5a;font-weight:normal;font-style:italic;white-space:nowrap;">0</div><div style="position:absolute;right:564.5px;top:806.10px;font-size:14px;line-height:14px;color:#5a5a5a;font-weight:normal;font-style:italic;white-space:nowrap;">0</div><div style="position:absolute;right:465.79999999999995px;top:806.10px;font-size:14px;line-height:14px;color:#5a5a5a;font-weight:normal;font-style:italic;white-space:nowrap;">0</div><div style="position:absolute;right:342.70000000000005px;top:806.10px;font-size:14px;line-height:14px;color:#5a5a5a;font-weight:normal;font-style:italic;white-space:nowrap;">0</div><div style="position:absolute;left:73px;top:833.10px;font-size:14px;line-height:14px;color:#5a5a5a;font-weight:normal;font-style:italic;white-space:nowrap;">0</div><div style="position:absolute;right:745.7px;top:833.10px;font-size:14px;line-height:14px;color:#5a5a5a;font-weight:normal;font-style:italic;white-space:nowrap;">0</div><div style="position:absolute;right:564.5px;top:833.10px;font-size:14px;line-height:14px;color:#5a5a5a;font-weight:normal;font-style:italic;white-space:nowrap;">0</div><div style="position:absolute;right:465.79999999999995px;top:833.10px;font-size:14px;line-height:14px;color:#5a5a5a;font-weight:normal;font-style:italic;white-space:nowrap;">0</div><div style="position:absolute;right:342.70000000000005px;top:833.10px;font-size:14px;line-height:14px;color:#5a5a5a;font-weight:normal;font-style:italic;white-space:nowrap;">0</div><div style="position:absolute;left:744px;top:231px;width:20px;height:628px;background:#e8e8e8"></div><div style="position:absolute;left:744px;top:231px;width:20px;height:20px;background:#ececec"></div><svg style="position:absolute;left:749px;top:237px" width="10" height="9" viewBox="0 0 10 9"><polyline points="1,7 5,2 9,7" fill="none" stroke="#444" stroke-width="2.4"/></svg><div style="position:absolute;left:744px;top:251px;width:20px;height:8.5px;background:#c9c9c9"></div><div style="position:absolute;left:764px;top:155px;width:3px;height:704px;background:#f7f6f5"></div><div style="position:absolute;left:767px;top:155px;width:233px;height:704px;background:#f3f0ed"></div><div style="position:absolute;left:780.37px;top:180.70px;font-size:18px;line-height:18px;color:#3a3a3a;font-weight:bold;font-style:normal;white-space:nowrap;transform:scaleX(1.0294);transform-origin:0 0;">Fields</div><svg style="position:absolute;left:975px;top:181px" width="10" height="16" viewBox="0 0 10 16"><polyline points="1,1 8,7.5 1,14" fill="none" stroke="#555" stroke-width="1.4"/></svg><div style="position:absolute;left:770.5px;top:225px;width:222.5px;height:38px;background:#ffffff;border:1.5px solid #cfcdcb;box-sizing:border-box"></div><svg style="position:absolute;left:785px;top:233px" width="21" height="21" viewBox="0 0 21 21"><circle cx="13" cy="7.5" r="6.5" fill="none" stroke="#333" stroke-width="1.5"/><path d="M8.5,12 L1.5,19" stroke="#333" stroke-width="1.7"/></svg><div style="position:absolute;left:816.41px;top:236.40px;font-size:16px;line-height:16px;color:#444444;font-weight:normal;font-style:normal;white-space:nowrap;transform:scaleX(0.9918);transform-origin:0 0;">Search</div><div style="position:absolute;left:767px;top:268px;width:228px;height:1px;background:#e6e3e0"></div><div style="position:absolute;left:766px;top:282px;width:226px;height:34.5px;background:#d6d3d0"></div><div style="position:absolute;left:993px;top:155px;width:5px;height:704px;background:#f6f5f4"></div><div style="position:absolute;left:998px;top:155px;width:1px;height:704px;background:#e2e2e2"></div><div style="position:absolute;left:999px;top:155px;width:1px;height:704px;background:#fafafa"></div><div style="position:absolute;left:992.5px;top:282px;width:6px;height:363px;background:#cdcbc9"></div><div style="position:absolute;left:992.5px;top:645px;width:6px;height:214px;background:#efeeed"></div><svg style="position:absolute;left:769.5px;top:295px" width="16" height="9" viewBox="0 0 16 9"><polyline points="1,8 8,1 15,8" fill="none" stroke="#444" stroke-width="1.4"/></svg><svg style="position:absolute;left:795px;top:291.5px" width="17" height="15.5" viewBox="0 0 17 15.5"><rect x="0.75" y="0.75" width="15.5" height="14.0" fill="none" stroke="#333" stroke-width="1.5"/><rect x="0" y="0" width="17" height="3" fill="#333"/><line x1="5.7" y1="0" x2="5.7" y2="15.5" stroke="#333" stroke-width="1.5"/><line x1="11.3" y1="0" x2="11.3" y2="15.5" stroke="#333" stroke-width="1.5"/><line x1="0" y1="7.2" x2="17" y2="7.2" stroke="#333" stroke-width="1.5"/><line x1="0" y1="11.3" x2="17" y2="11.3" stroke="#333" stroke-width="1.5"/></svg><div style="position:absolute;left:828.00px;top:291.25px;font-size:15px;line-height:15px;color:#333333;font-weight:normal;font-style:normal;white-space:nowrap;transform:scaleX(0.9932);transform-origin:0 0;">Accidents_Geneve -...</div><div style="position:absolute;left:768px;top:818.5px;width:225px;height:33.5px;background:#d5d2cf;border:2px solid #5ac6ee;box-sizing:border-box"></div><svg style="position:absolute;left:787px;top:332.2px" width="12" height="12" viewBox="0 0 12 12"><path d="M0.6,0 L12,0 L12,2.8 L11.2,1.9 L3.6,1.9 L7.2,5.9 L2.9,10.1 L11.2,10.1 L12,9.2 L12,11.8 L0,11.8 L0,11.2 L5,6 L0.6,1.1 Z" fill="#2a2a2a"/></svg><div style="position:absolute;left:813.00px;top:330.82px;font-size:15.5px;line-height:15.5px;color:#333;font-weight:normal;font-style:normal;white-space:nowrap;transform:scaleX(0.9321);transform-origin:0 0;">ANNEE</div><div style="position:absolute;left:812.12px;top:362.02px;font-size:15.5px;line-height:15.5px;color:#333;font-weight:normal;font-style:normal;white-space:nowrap;transform:scaleX(0.8846);transform-origin:0 0;">CAUSE</div><div style="position:absolute;left:812.02px;top:393.22px;font-size:15.5px;line-height:15.5px;color:#b5b3b1;font-weight:normal;font-style:normal;white-space:nowrap;transform:scaleX(0.9802);transform-origin:0 0;">COMMUNE</div><div style="position:absolute;left:812.05px;top:424.43px;font-size:15.5px;line-height:15.5px;color:#b5b3b1;font-weight:normal;font-style:normal;white-space:nowrap;transform:scaleX(0.9500);transform-origin:0 0;">CONDITIONS_LUMI...</div><div style="position:absolute;left:812.08px;top:455.62px;font-size:15.5px;line-height:15.5px;color:#b5b3b1;font-weight:normal;font-style:normal;white-space:nowrap;transform:scaleX(0.9219);transform-origin:0 0;">CONDITIONS_METEO</div><div style="position:absolute;left:812.11px;top:486.82px;font-size:15.5px;line-height:15.5px;color:#b5b3b1;font-weight:normal;font-style:normal;white-space:nowrap;transform:scaleX(0.8870);transform-origin:0 0;">CONSEQUENCES</div><svg style="position:absolute;left:787px;top:519.4000000000001px" width="12" height="12" viewBox="0 0 12 12"><path d="M0.6,0 L12,0 L12,2.8 L11.2,1.9 L3.6,1.9 L7.2,5.9 L2.9,10.1 L11.2,10.1 L12,9.2 L12,11.8 L0,11.8 L0,11.2 L5,6 L0.6,1.1 Z" fill="#2a2a2a"/></svg><div style="position:absolute;left:812.11px;top:518.03px;font-size:15.5px;line-height:15.5px;color:#b5b3b1;font-weight:normal;font-style:normal;white-space:nowrap;transform:scaleX(0.8938);transform-origin:0 0;">COOR_X</div><svg style="position:absolute;left:787px;top:550.6px" width="12" height="12" viewBox="0 0 12 12"><path d="M0.6,0 L12,0 L12,2.8 L11.2,1.9 L3.6,1.9 L7.2,5.9 L2.9,10.1 L11.2,10.1 L12,9.2 L12,11.8 L0,11.8 L0,11.2 L5,6 L0.6,1.1 Z" fill="#2a2a2a"/></svg><div style="position:absolute;left:812.11px;top:549.23px;font-size:15.5px;line-height:15.5px;color:#b5b3b1;font-weight:normal;font-style:normal;white-space:nowrap;transform:scaleX(0.8875);transform-origin:0 0;">COOR_Y</div><svg style="position:absolute;left:788.2px;top:582.2px" width="6" height="10" viewBox="0 0 6 10"><polygon points="0,0 5.4,4.6 0,9.2" fill="#222"/></svg><svg style="position:absolute;left:806.5px;top:578.6px" width="16" height="17" viewBox="0 0 16 17"><rect x="1.15" y="1.9" width="14.1" height="14.1" fill="none" stroke="#2e2e2e" stroke-width="1.3"/><line x1="0.5" y1="4.9" x2="15.9" y2="4.9" stroke="#2e2e2e" stroke-width="1.3"/><rect x="3.3" y="0.4" width="1.7" height="3" fill="#2e2e2e"/><rect x="11.4" y="0.4" width="1.7" height="3" fill="#2e2e2e"/><rect x="3.0" y="7.5" width="2.2" height="2.2" fill="#2e2e2e"/><rect x="7.1" y="7.5" width="2.2" height="2.2" fill="#2e2e2e"/><rect x="11.2" y="7.5" width="2.2" height="2.2" fill="#2e2e2e"/><rect x="3.0" y="11.4" width="2.2" height="2.2" fill="#2e2e2e"/><rect x="7.1" y="11.4" width="2.2" height="2.2" fill="#2e2e2e"/><rect x="11.2" y="11.4" width="2.2" height="2.2" fill="#2e2e2e"/></svg><div style="position:absolute;left:833.61px;top:580.43px;font-size:15.5px;line-height:15.5px;color:#333;font-weight:normal;font-style:normal;white-space:nowrap;transform:scaleX(0.8872);transform-origin:0 0;">DATE</div><div style="position:absolute;left:812.14px;top:611.62px;font-size:15.5px;line-height:15.5px;color:#333;font-weight:normal;font-style:normal;white-space:nowrap;transform:scaleX(0.8646);transform-origin:0 0;">ETAT_ROUTE</div><div style="position:absolute;left:812.14px;top:642.83px;font-size:15.5px;line-height:15.5px;color:#333;font-weight:normal;font-style:normal;white-space:nowrap;transform:scaleX(0.8624);transform-origin:0 0;">GENRE_ROUTE</div><div style="position:absolute;left:812.11px;top:674.03px;font-size:15.5px;line-height:15.5px;color:#333;font-weight:normal;font-style:normal;white-space:nowrap;transform:scaleX(0.8851);transform-origin:0 0;">GROUPE_ACCIDENT</div><svg style="position:absolute;left:788.2px;top:707.0px" width="6" height="10" viewBox="0 0 6 10"><polygon points="0,0 5.4,4.6 0,9.2" fill="#222"/></svg><svg style="position:absolute;left:806.5px;top:703.4px" width="16" height="17" viewBox="0 0 16 17"><rect x="1.15" y="1.9" width="14.1" height="14.1" fill="none" stroke="#2e2e2e" stroke-width="1.3"/><line x1="0.5" y1="4.9" x2="15.9" y2="4.9" stroke="#2e2e2e" stroke-width="1.3"/><rect x="3.3" y="0.4" width="1.7" height="3" fill="#2e2e2e"/><rect x="11.4" y="0.4" width="1.7" height="3" fill="#2e2e2e"/><rect x="3.0" y="7.5" width="2.2" height="2.2" fill="#2e2e2e"/><rect x="7.1" y="7.5" width="2.2" height="2.2" fill="#2e2e2e"/><rect x="11.2" y="7.5" width="2.2" height="2.2" fill="#2e2e2e"/><rect x="3.0" y="11.4" width="2.2" height="2.2" fill="#2e2e2e"/><rect x="7.1" y="11.4" width="2.2" height="2.2" fill="#2e2e2e"/><rect x="11.2" y="11.4" width="2.2" height="2.2" fill="#2e2e2e"/></svg><div style="position:absolute;left:833.65px;top:705.23px;font-size:15.5px;line-height:15.5px;color:#333;font-weight:normal;font-style:normal;white-space:nowrap;transform:scaleX(0.8547);transform-origin:0 0;">HEURE</div><svg style="position:absolute;left:787px;top:737.8px" width="12" height="12" viewBox="0 0 12 12"><path d="M0.6,0 L12,0 L12,2.8 L11.2,1.9 L3.6,1.9 L7.2,5.9 L2.9,10.1 L11.2,10.1 L12,9.2 L12,11.8 L0,11.8 L0,11.2 L5,6 L0.6,1.1 Z" fill="#2a2a2a"/></svg><div style="position:absolute;left:812.11px;top:736.42px;font-size:15.5px;line-height:15.5px;color:#333;font-weight:normal;font-style:normal;white-space:nowrap;transform:scaleX(0.8932);transform-origin:0 0;">ID_ACCIDENT</div><div style="position:absolute;left:813.00px;top:767.62px;font-size:15.5px;line-height:15.5px;color:#333;font-weight:normal;font-style:normal;white-space:nowrap;transform:scaleX(0.8810);transform-origin:0 0;">JOUR</div><svg style="position:absolute;left:787px;top:800.2px" width="12" height="12" viewBox="0 0 12 12"><path d="M0.6,0 L12,0 L12,2.8 L11.2,1.9 L3.6,1.9 L7.2,5.9 L2.9,10.1 L11.2,10.1 L12,9.2 L12,11.8 L0,11.8 L0,11.2 L5,6 L0.6,1.1 Z" fill="#2a2a2a"/></svg><div style="position:absolute;left:812.15px;top:798.83px;font-size:15.5px;line-height:15.5px;color:#b5b3b1;font-weight:normal;font-style:normal;white-space:nowrap;transform:scaleX(0.8519);transform-origin:0 0;">NB_BICYCLETTES</div><svg style="position:absolute;left:787px;top:831.4000000000001px" width="12" height="12" viewBox="0 0 12 12"><path d="M0.6,0 L12,0 L12,2.8 L11.2,1.9 L3.6,1.9 L7.2,5.9 L2.9,10.1 L11.2,10.1 L12,9.2 L12,11.8 L0,11.8 L0,11.2 L5,6 L0.6,1.1 Z" fill="#2a2a2a"/></svg><div style="position:absolute;left:812.15px;top:830.03px;font-size:15.5px;line-height:15.5px;color:#333;font-weight:normal;font-style:normal;white-space:nowrap;transform:scaleX(0.8453);transform-origin:0 0;">NB_BLESSES_GRAVES</div><div style="position:absolute;left:1px;top:212px;width:65px;height:56.5px;border:4px solid #e3131f;box-sizing:border-box"></div>
</body></html>
